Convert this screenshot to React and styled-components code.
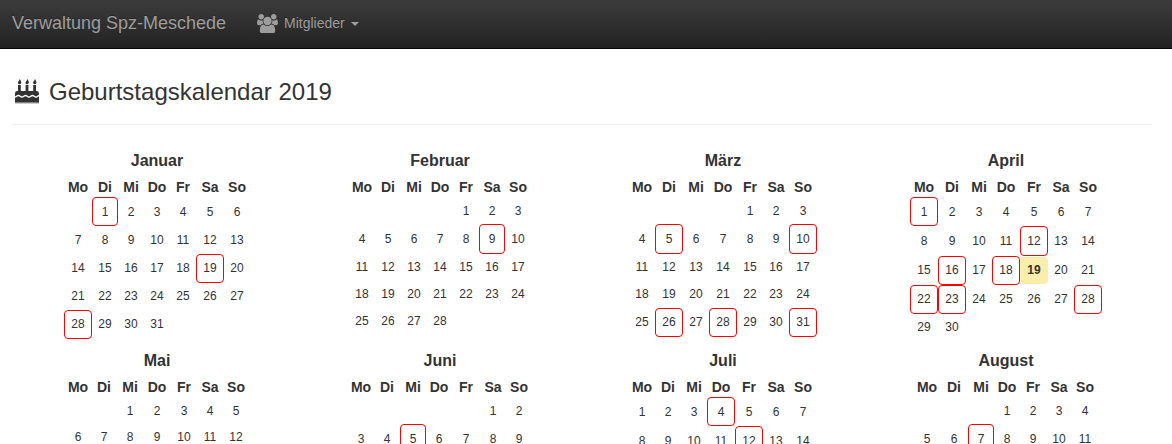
import React from "react";
import styled, { createGlobalStyle } from "styled-components";

const GlobalStyle = createGlobalStyle`
  * { box-sizing: border-box; }
  body {
    margin: 0;
    background: #fff;
    color: #333;
    font-family: "Liberation Sans", Arial, sans-serif;
    font-size: 14px;
    line-height: 20px;
  }
`;

const Viewport = styled.div`
  height: 100vh;
  overflow: hidden;
`;

const Navbar = styled.nav`
  display: flex;
  align-items: center;
  height: 49px;
  padding: 0 12px 2px;
  border-bottom: 1px solid #080808;
  background: linear-gradient(to bottom, #3c3c3c 0, #222 100%);
  color: #9d9d9d;
  text-shadow: 0 -1px 0 rgba(0, 0, 0, 0.25);
`;

const Brand = styled.span`
  width: 245px;
  font-size: 18px;
  white-space: nowrap;
`;

const NavItem = styled.div`
  display: flex;
  align-items: center;
`;

const NavLabel = styled.span`
  margin: 0 6px 0 6px;
`;

const UsersSvg = styled.svg`
  display: block;
  width: 21px;
  height: 19.5px;
  margin-top: 1px;
  fill: currentColor;
`;

const Caret = styled.span`
  border-top: 4px solid currentColor;
  border-left: 4px solid transparent;
  border-right: 4px solid transparent;
  margin-top: 2px;
`;

const Page = styled.main`
  padding: 0 20px 0 12px;
`;

const PageHeader = styled.header`
  display: flex;
  align-items: center;
  height: 76px;
  padding: 10px 0 0 3px;
  border-bottom: 1px solid #eee;
`;

const CakeSvg = styled.svg`
  width: 24px;
  height: 25px;
  margin-bottom: 1px;
  fill: currentColor;
`;

const PageTitle = styled.h1`
  margin: 0 0 0 10px;
  font-size: 24px;
  line-height: 26px;
  font-weight: 400;
`;

const Year = styled.section`
  display: grid;
  grid-template-columns: repeat(4, 283px);
  grid-auto-rows: 200px;
  padding: 26px 0 0 3.5px;
`;

const Month = styled.article`
  display: flex;
  flex-direction: column;
  align-items: center;
`;

const MonthTitle = styled.h2`
  margin: 0;
  font-size: 16px;
  line-height: 20px;
  font-weight: 700;
`;

const Weekdays = styled.div`
  display: grid;
  grid-template-columns: ${(p) => p.$columns};
  height: 26px;
  padding-top: 6px;
  font-weight: 700;
  text-align: center;
`;

const Days = styled.div`
  display: grid;
  grid-template-columns: ${(p) => p.$columns};
  grid-template-rows: ${(p) => p.$rows};
`;

const Day = styled.div`
  display: flex;
  align-items: center;
  justify-content: center;
  font-size: 12px;
  line-height: 17px;
  padding-top: ${(p) => (p.$firstWeek ? "2px" : 0)};
  border: 1px solid ${(p) => (p.$birthday ? "#f00" : "transparent")};
  border-radius: 4px;
`;

const Today = styled(Day)`
  margin: 1px 0;
  border: 0;
  background: #fbedaa;
  font-weight: 700;
`;

const WEEKDAYS = ["Mo", "Di", "Mi", "Do", "Fr", "Sa", "So"];

const MONTHS = [
  { name: "Januar", start: 1, days: 31, birthdays: [1, 19, 28], columns: [28, 26, 26, 26, 26, 28, 26], rows: [29, 28, 29, 27, 29] },
  { name: "Februar", start: 4, days: 28, birthdays: [9], columns: [26, 26, 26, 26, 26, 26, 26], rows: [27, 30, 27, 27, 27] },
  { name: "März", start: 4, days: 31, birthdays: [5, 10, 26, 28, 31], columns: [26, 28, 26, 28, 26, 26, 28], rows: [27, 30, 27, 27, 29] },
  { name: "April", start: 0, days: 30, birthdays: [1, 12, 16, 18, 22, 23, 28], today: 19, columns: [28, 28, 26, 28, 28, 26, 28], rows: [29, 30, 29, 29, 27] },
  { name: "Mai", start: 2, days: 12, birthdays: [], columns: [26, 26, 26, 28, 26, 26, 26], rows: [27, 27] },
  { name: "Juni", start: 5, days: 9, birthdays: [5], columns: [26, 26, 26, 26, 28, 26, 26], rows: [27, 30] },
  { name: "Juli", start: 0, days: 14, birthdays: [4, 12], columns: [26, 26, 26, 28, 28, 26, 28], rows: [29, 30] },
  { name: "August", start: 3, days: 11, birthdays: [7], columns: [26, 28, 26, 26, 26, 26, 26], rows: [27, 30] },
];

const px = (sizes) => sizes.map((s) => `${s}px`).join(" ");

const UsersIcon = () => (
  <UsersSvg viewBox="0 0 1920 1792" aria-hidden="true">
    <path d="M593 896q-162 5-265 128H194q-82 0-138-40.5T0 865q0-353 124-353 6 0 43.5 21t97.5 42.5T384 597q67 0 133-23-5 37-5 66 0 139 81 256zm1071 637q0 120-73 189.5t-194 69.5H523q-121 0-194-69.5T256 1533q0-53 3.5-103.5t14-109T300 1212t43-97.5 62-81 85.5-53.5T602 960q10 0 43 21.5t73 48 107 48 135 21.5 135-21.5 107-48 73-48 43-21.5q61 0 111.5 20t85.5 53.5 62 81 43 97.5 26.5 108.5 14 109 3.5 103.5zM640 256q0 106-75 181t-181 75-181-75-75-181 75-181T384 0t181 75 75 181zm704 384q0 159-112.5 271.5T960 1024 688.5 911.5 576 640t112.5-271.5T960 256t271.5 112.5T1344 640zm576 225q0 78-56 118.5t-138 40.5h-134q-103-123-265-128 81-117 81-256 0-29-5-66 66 23 133 23 59 0 119-21.5t97.5-42.5 43.5-21q124 0 124 353zm-128-609q0 106-75 181t-181 75-181-75-75-181 75-181 181-75 181 75 75 181z" />
  </UsersSvg>
);

const CakeIcon = () => (
  <CakeSvg viewBox="0 0 24 25" aria-hidden="true">
    <path d="M3 6h2.8v6h4.8V6h2.8v6h4.8V6H21v6h.6A2.4 2.4 0 0 1 24 14.4V23.5H0v-9.1A2.4 2.4 0 0 1 2.4 12H3z" />
    <path d="M4.6 0C5.6 1 6.2 2.4 6.2 3.4 6.2 4.5 5.5 5.2 4.5 5.2S2.9 4.6 2.9 3.7C2.9 2.3 4.6 2 4.6 0zM12.2 0c1 1 1.6 2.4 1.6 3.4 0 1.1-.7 1.8-1.7 1.8s-1.6-.6-1.6-1.5c0-1.4 1.7-1.7 1.7-3.7zM19.8 0c1 1 1.6 2.4 1.6 3.4 0 1.1-.7 1.8-1.7 1.8s-1.6-.6-1.6-1.5c0-1.4 1.7-1.7 1.7-3.7z" />
    <path
      d="M-.2 18c1.8 0 1.8-1.5 3.6-1.5S5.200 18 7 18s1.800-1.500 3.500-1.500S12.300 18 14 18s1.800-1.500 3.500-1.500S19.300 18 21 18s1.800-1.500 3.200-1.500"
      fill="none"
      stroke="#fff"
      strokeWidth="1.4"
    />
    <path d="M0 23.500h24v1H0z" opacity="0.5" />
  </CakeSvg>
);

function MonthCalendar({ month }) {
  const columns = px(month.columns);
  return (
    <Month>
      <MonthTitle>{month.name}</MonthTitle>
      <Weekdays $columns={columns}>
        {WEEKDAYS.map((day) => (
          <span key={day}>{day}</span>
        ))}
      </Weekdays>
      <Days $columns={columns} $rows={px(month.rows)}>
        {Array.from({ length: month.start }, (_, i) => (
          <Day key={`blank-${i}`} />
        ))}
        {Array.from({ length: month.days }, (_, i) => i + 1).map((n) =>
          n === month.today ? (
            <Today key={n}>{n}</Today>
          ) : (
            <Day
              key={n}
              $firstWeek={n + month.start <= 7}
              $birthday={month.birthdays.includes(n)}
            >
              {n}
            </Day>
          )
        )}
      </Days>
    </Month>
  );
}

export default function App() {
  return (
    <Viewport>
      <GlobalStyle />
      <Navbar>
        <Brand>Verwaltung Spz-Meschede</Brand>
        <NavItem>
          <UsersIcon />
          <NavLabel>Mitglieder</NavLabel>
          <Caret />
        </NavItem>
      </Navbar>
      <Page>
        <PageHeader>
          <CakeIcon />
          <PageTitle>Geburtstagskalendar 2019</PageTitle>
        </PageHeader>
        <Year>
          {MONTHS.map((month) => (
            <MonthCalendar key={month.name} month={month} />
          ))}
        </Year>
      </Page>
    </Viewport>
  );
}
